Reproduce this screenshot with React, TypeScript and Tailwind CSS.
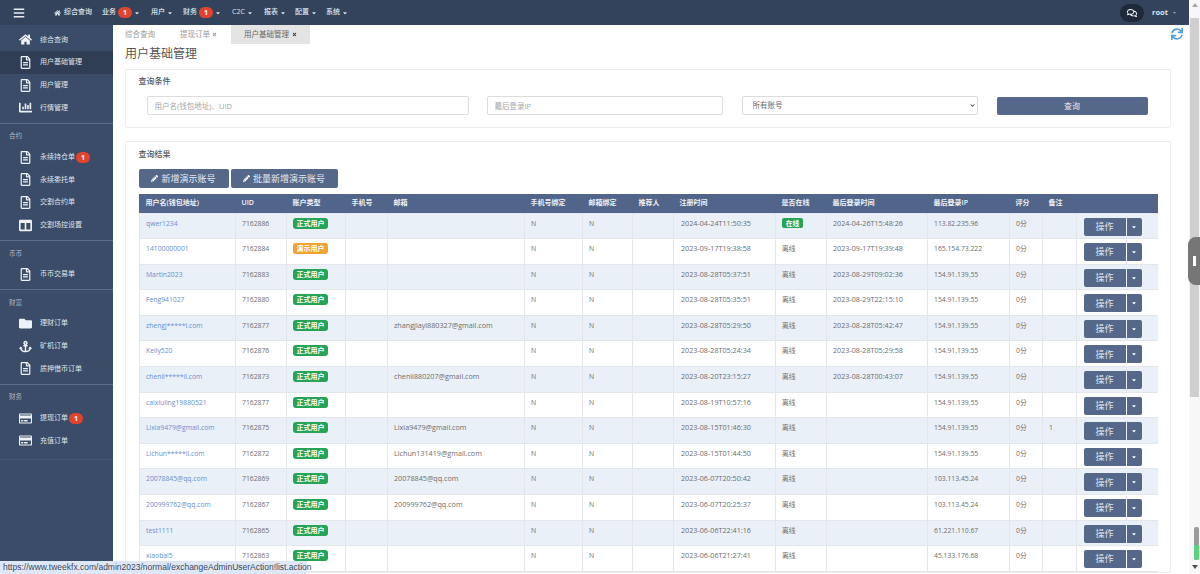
import {
  FaAnchor,
  FaBars,
  FaCaretDown,
  FaChartBar,
  FaChevronDown,
  FaColumns,
  FaFolder,
  FaHome,
  FaPencilAlt,
  FaRegComments,
  FaRegCreditCard,
  FaRegFileAlt,
  FaSync,
  FaTimes,
} from "react-icons/fa";

const fontStack = "font-['Open_Sans','Noto_Sans_CJK_SC',sans-serif]";

interface UserRow {
  name: string;
  uid: string;
  demo?: boolean;
  email?: string;
  registered: string;
  online?: boolean;
  lastLogin?: string;
  ip: string;
  note?: string;
}

const rows: UserRow[] = [
  { name: "qwer1234", uid: "7162886", registered: "2024-04-24T11:50:35", online: true, lastLogin: "2024-04-26T15:48:26", ip: "113.82.235.96" },
  { name: "14100000001", uid: "7162884", demo: true, registered: "2023-09-17T19:38:58", lastLogin: "2023-09-17T19:39:48", ip: "165.154.73.222" },
  { name: "Martin2023", uid: "7162883", registered: "2023-08-28T05:37:51", lastLogin: "2023-08-29T09:02:36", ip: "154.91.139.55" },
  { name: "Feng941027", uid: "7162880", registered: "2023-08-28T05:35:51", lastLogin: "2023-08-29T22:15:10", ip: "154.91.139.55" },
  { name: "zhengj*****l.com", uid: "7162877", email: "zhangjiayi880327@gmail.com", registered: "2023-08-28T05:29:50", lastLogin: "2023-08-28T05:42:47", ip: "154.91.139.55" },
  { name: "Kelly520", uid: "7162876", registered: "2023-08-28T05:24:34", lastLogin: "2023-08-28T05:29:58", ip: "154.91.139.55" },
  { name: "chenli*****il.com", uid: "7162873", email: "chenli880207@gmail.com", registered: "2023-08-20T23:15:27", lastLogin: "2023-08-28T00:43:07", ip: "154.91.139.55" },
  { name: "caixiuling19880521", uid: "7162877", registered: "2023-08-19T10:57:16", ip: "154.91.139.55" },
  { name: "Lixia9479@gmail.com", uid: "7162875", email: "Lixia9479@gmail.com", registered: "2023-08-15T01:46:30", ip: "154.91.139.55", note: "1" },
  { name: "Lichun*****il.com", uid: "7162872", email: "Lichun131419@gmail.com", registered: "2023-08-15T01:44:50", ip: "154.91.139.55" },
  { name: "20078845@qq.com", uid: "7162869", email: "20078845@qq.com", registered: "2023-06-07T20:50:42", ip: "103.113.45.24" },
  { name: "200999762@qq.com", uid: "7162867", email: "200999762@qq.com", registered: "2023-06-07T20:25:37", ip: "103.113.45.24" },
  { name: "test1111", uid: "7162865", registered: "2023-06-06T22:41:16", ip: "61.221.110.67" },
  { name: "xiaobai5", uid: "7162863", registered: "2023-06-06T21:27:41", ip: "45.133.176.68" },
];

const columns = [
  { label: "用户名(钱包地址)", width: 96 },
  { label: "UID", width: 51 },
  { label: "账户类型", width: 59 },
  { label: "手机号", width: 42 },
  { label: "邮箱", width: 137 },
  { label: "手机号绑定", width: 58 },
  { label: "邮箱绑定", width: 50 },
  { label: "推荐人", width: 41 },
  { label: "注册时间", width: 102 },
  { label: "是否在线", width: 51 },
  { label: "最后登录时间", width: 101 },
  { label: "最后登录IP", width: 82 },
  { label: "评分", width: 33 },
  { label: "备注", width: 34 },
  { label: "", width: 82 },
];

const sideGroups = [
  {
    label: "",
    items: [
      { text: "综合查询", icon: <FaHome /> },
      { text: "用户基础管理", icon: <FaRegFileAlt />, active: true },
      { text: "用户管理", icon: <FaRegFileAlt /> },
      { text: "行情管理", icon: <FaChartBar /> },
    ],
  },
  {
    label: "合约",
    items: [
      { text: "永续持仓单", icon: <FaRegFileAlt />, badge: "1" },
      { text: "永续委托单", icon: <FaRegFileAlt /> },
      { text: "交割合约单", icon: <FaRegFileAlt /> },
      { text: "交割场控设置", icon: <FaColumns /> },
    ],
  },
  {
    label: "币币",
    items: [{ text: "币币交易单", icon: <FaRegFileAlt /> }],
  },
  {
    label: "财富",
    items: [
      { text: "理财订单", icon: <FaFolder /> },
      { text: "矿机订单", icon: <FaAnchor /> },
      { text: "质押借币订单", icon: <FaRegFileAlt /> },
    ],
  },
  {
    label: "财务",
    items: [
      { text: "提现订单", icon: <FaRegCreditCard />, badge: "1" },
      { text: "充值订单", icon: <FaRegCreditCard /> },
    ],
  },
];

const topMenu = [
  { text: "业务", badge: "1", className: "w-[49px]" },
  { text: "用户", className: "w-[32px]" },
  { text: "财务", badge: "1", className: "w-[49px]" },
  { text: "C2C", className: "w-[32px]" },
  { text: "报表", className: "w-[31px]" },
  { text: "配置", className: "w-[31px]" },
  { text: "系统", className: "w-[24px]" },
];

function Badge({ value }: { value: string }) {
  return (
    <span className="flex h-[11px] w-[14px] items-center justify-center rounded-full bg-[#e2432e] text-[7px] font-bold leading-none text-white">
      {value}
    </span>
  );
}

function TopBar() {
  return (
    <header className="flex h-[25px] shrink-0 items-center bg-[#33435b] text-[7px] font-medium text-[#dfe4ec]">
      <FaBars className="ml-[13px] h-[12px] w-[12px] text-[#e8ecf2]" />
      <FaHome className="ml-[29px] h-[6px] w-[7px]" />
      <span className="ml-[3px] w-[38px]">综合查询</span>
      <nav className="flex items-center">
        {topMenu.map((m) => (
          <div key={m.text} className={`flex shrink-0 items-center ${m.className}`}>
            <span>{m.text}</span>
            {m.badge && (
              <span className="ml-[2px]">
                <Badge value={m.badge} />
              </span>
            )}
            <FaCaretDown className="ml-[2px] h-[6px] w-[6px]" />
          </div>
        ))}
      </nav>
      <div className="ml-auto flex h-[18px] w-[24px] items-center justify-center rounded-full bg-[#1e2a3b]">
        <FaRegComments className="h-[10px] w-[10px] text-white" />
      </div>
      <span className="ml-[8px] text-[7.5px] font-bold">root</span>
      <FaCaretDown className="ml-[4px] mr-[12px] h-[5px] w-[5px] text-[#9aa6b8]" />
    </header>
  );
}

function Sidebar() {
  return (
    <aside className="flex w-[113px] shrink-0 flex-col bg-[#3a4c67] pt-[3.5px] text-[7px] text-[#dfe5ee]">
      {sideGroups.map((g, i) => (
        <div
          key={i}
          className={`border-b pb-[3.5px] ${i === 4 ? "border-[#45566f] pb-[7px]" : "border-[#5d6d85]"}`}
        >
          {g.label && (
            <div className="flex h-[22px] items-center pl-[9px] pt-[3px] text-[6.5px] text-[#aeb9c8]">
              {g.label}
            </div>
          )}
          {g.items.map((item) => (
            <div
              key={item.text}
              className={`flex h-[22.7px] items-center ${item.active ? "bg-[#2f3e55]" : ""}`}
            >
              <span className="flex w-[40px] shrink-0 items-center justify-center pl-[10px] text-[13px] text-[#eef1f5]">
                {item.icon}
              </span>
              <span>{item.text}</span>
              {item.badge && (
                <span className="ml-[1px]">
                  <Badge value={item.badge} />
                </span>
              )}
            </div>
          ))}
        </div>
      ))}
    </aside>
  );
}

function Tabs() {
  return (
    <div className="flex h-[18.5px] items-center pl-[12px] text-[7.5px] text-[#9a9a9a]">
      <span className="w-[55px]">综合查询</span>
      <span className="flex w-[51px] items-center gap-[2px]">
        提现订单 <FaTimes className="h-[5px] w-[5px]" />
      </span>
      <span className="flex h-full w-[79px] items-center gap-[3px] bg-[#e4e4e4] pl-[13px] text-[#666]">
        用户基础管理 <FaTimes className="h-[5px] w-[5px] text-[#444]" />
      </span>
    </div>
  );
}

function QueryCard() {
  return (
    <section className="ml-[12px] mr-[18px] mt-[5.5px] h-[59px] rounded-[2px] border border-[#eeeeee] bg-white pl-[12.5px] pt-[5px]">
      <h3 className="text-[8px] font-medium leading-[11px] text-[#555]">查询条件</h3>
      <div className="mt-[10px] flex items-center text-[7.5px]">
        <input
          placeholder="用户名(钱包地址)、UID"
          className="ml-[8px] h-[19px] w-[322px] rounded-[2px] border border-[#dcdcdc] px-[7px] outline-none placeholder:text-[#a5a5a5]"
        />
        <input
          placeholder="最后登录IP"
          className="ml-[18px] h-[19px] w-[236px] rounded-[2px] border border-[#dcdcdc] px-[7px] outline-none placeholder:text-[#a5a5a5]"
        />
        <div className="relative ml-[19px] h-[19px] w-[236px]">
          <select className="h-full w-full appearance-none rounded-[2px] border border-[#dcdcdc] bg-white px-[10px] text-[#666] outline-none">
            <option>所有账号</option>
          </select>
          <FaChevronDown className="absolute right-[3px] top-[7px] h-[5px] w-[5px] text-[#333]" />
        </div>
        <button className="ml-[19px] h-[18px] w-[151px] rounded-[2px] bg-[#55688a] text-[8px] text-[#e6eaf0]">
          查询
        </button>
      </div>
    </section>
  );
}

// date and email columns run a touch wider than the rest
const cellSize: Record<number, string> = {
  4: "text-[7.2px]",
  8: "pl-[7.5px] text-[7.2px]",
  10: "text-[7.2px]",
};

function UserTable() {
  return (
    <table className="w-[1019px] table-fixed border-collapse text-[6.8px] text-[#6e6e6e]">
      <colgroup>
        {columns.map((c, i) => (
          <col key={i} style={{ width: c.width }} />
        ))}
      </colgroup>
      <thead>
        <tr className="h-[19px] bg-[#51658a] text-left text-[7px] text-[#eef1f6]">
          {columns.map((c, i) => (
            <th key={i} className="px-[6.5px] font-semibold">
              {c.label}
            </th>
          ))}
        </tr>
      </thead>
      <tbody>
        {rows.map((r, i) => (
          <tr key={r.name} className={`h-[25.6px] ${i % 2 === 0 ? "bg-[#eaf0f8]" : "bg-white"}`}>
            {[
              <span className="text-[#6a8fce]">{r.name}</span>,
              r.uid,
              <TypeBadge demo={r.demo} />,
              "",
              r.email ?? "",
              "N",
              "N",
              "",
              r.registered,
              r.online ? (
                <span className="inline-flex h-[10px] w-[21px] items-center justify-center rounded-[2px] bg-[#27a355] font-semibold text-white">
                  在线
                </span>
              ) : (
                "离线"
              ),
              r.lastLogin ?? "",
              r.ip,
              "0分",
              r.note ?? "",
            ].map((cell, c) => (
              <td
                key={c}
                className={`overflow-hidden whitespace-nowrap border border-[#e3e7ec] px-[6.5px] pt-[4px] align-top leading-[11px] ${cellSize[c] ?? ""}`}
              >
                {cell}
              </td>
            ))}
            <td className="border-y border-[#e3e7ec] pr-[16.5px] pt-[4px] align-top">
              <ActionButton />
            </td>
          </tr>
        ))}
      </tbody>
    </table>
  );
}

function TypeBadge({ demo }: { demo?: boolean }) {
  return (
    <span
      className={`flex h-[11px] w-[35px] items-center justify-center rounded-[3px] text-[7px] font-semibold text-white ${
        demo ? "bg-[#efa32c]" : "bg-[#27a355]"
      }`}
    >
      {demo ? "演示用户" : "正式用户"}
    </span>
  );
}

function ActionButton() {
  return (
    <div className="ml-auto flex h-[18px] w-[58px] text-[#dfe4ec]">
      <span className="flex w-[42px] items-center justify-center rounded-l-[2px] bg-[#55688a] text-[9px]">
        操作
      </span>
      <span className="ml-[1px] flex w-[15px] items-center justify-center rounded-r-[2px] bg-[#55688a]">
        <FaCaretDown className="h-[6px] w-[6px] text-white" />
      </span>
    </div>
  );
}

function ResultCard() {
  return (
    <section className="ml-[12px] mr-[18px] mt-[13px] rounded-[2px] border border-[#eeeeee] bg-white pl-[12.5px] pt-[6px]">
      <h3 className="text-[8px] font-medium leading-[11px] text-[#555]">查询结果</h3>
      <div className="mb-[6.5px] mt-[10px] flex gap-[2px] text-[9px] text-[#e6eaf0]">
        <button className="flex h-[18.5px] w-[90px] items-center justify-center gap-[3px] rounded-[2px] bg-[#55688a]">
          <FaPencilAlt className="h-[7px] w-[7px] text-white" /> 新增演示账号
        </button>
        <button className="flex h-[18.5px] w-[107px] items-center justify-center gap-[3px] rounded-[2px] bg-[#55688a]">
          <FaPencilAlt className="h-[7px] w-[7px] text-white" /> 批量新增演示账号
        </button>
      </div>
      <UserTable />
    </section>
  );
}

function Scrollbar() {
  return (
    <div className="flex w-[11px] shrink-0 flex-col items-center bg-[#f7f7f7]">
      <div className="mt-[3px] h-0 w-0 border-x-[3px] border-b-[4px] border-x-transparent border-b-[#a8a8a8]" />
      <div className="mt-[11px] h-[379px] w-[9px] bg-[#cfcfcf]" />
      <div className="mb-[5px] mt-auto h-0 w-0 border-x-[3px] border-t-[4px] border-x-transparent border-t-[#505050]" />
    </div>
  );
}

export default function App() {
  return (
    <div className={`relative flex h-screen w-full overflow-hidden bg-white ${fontStack}`}>
      <div className="flex min-w-0 flex-1 flex-col">
        <TopBar />
        <div className="flex min-h-0 flex-1">
          <Sidebar />
          <main className="relative min-w-0 flex-1 overflow-hidden">
            <Tabs />
            <FaSync className="absolute right-[6px] top-[3px] h-[12px] w-[12px] text-[#4a9fdc]" />
            <h1 className="pl-[12px] text-[12px] font-normal leading-[20px] text-[#555]">用户基础管理</h1>
            <QueryCard />
            <ResultCard />
          </main>
        </div>
      </div>
      <Scrollbar />
      {/* browser overlays caught in the screenshot */}
      <div className="absolute right-0 top-[237px] flex h-[48px] w-[12px] items-center justify-center rounded-l-[8px] bg-[#767676]">
        <span className="h-[10px] w-[3px] bg-white" />
      </div>
      <div className="absolute bottom-[14px] right-[1px] h-[33px] w-[5px] overflow-hidden rounded-[2px] bg-[#9a9a9a]">
        <div className="mt-[18px] h-[15px] bg-[#5fd07f]" />
      </div>
      <div className="absolute bottom-0 left-0 flex h-[13px] w-[307px] items-center whitespace-nowrap bg-[#dde7f6] pl-[3px] font-['Liberation_Sans',sans-serif] text-[8.5px] text-[#3c4a5c]">
        https://www.tweekfx.com/admin2023/normal/exchangeAdminUserAction!list.action
      </div>
    </div>
  );
}
